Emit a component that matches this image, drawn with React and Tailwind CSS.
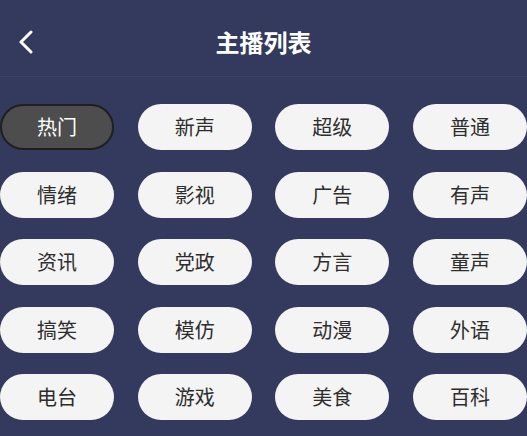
import React from "react";

const tags = [
  "热门", "新声", "超级", "普通",
  "情绪", "影视", "广告", "有声",
  "资讯", "党政", "方言", "童声",
  "搞笑", "模仿", "动漫", "外语",
  "电台", "游戏", "美食", "百科",
];

export default function App() {
  return (
    <div
      className="w-[527px] h-[436px] overflow-hidden bg-[#333a5e]"
      style={{ fontFamily: '"Noto Sans CJK SC", "Noto Sans", sans-serif' }}
    >
      <div className="relative h-[77px] pt-[8px] flex items-center justify-center border-b border-[#3c4367]">
        <svg
          className="absolute left-[17px] top-[30px]"
          width="18"
          height="24"
          viewBox="0 0 18 24"
          fill="none"
        >
          <path d="M14 2 L4 12 L14 22" stroke="white" strokeWidth="3" strokeLinecap="round" strokeLinejoin="round" />
        </svg>
        <div className="text-white text-[24px] font-bold leading-none">主播列表</div>
      </div>
      <div className="pt-[27px] grid grid-cols-[114px_114px_114px_114px] justify-between gap-y-[21.5px]">
        {tags.map((t, i) => (
          <div
            key={t}
            className={
              i === 0
                ? "h-[46px] rounded-full bg-[#4d4d4d] border-2 border-[#1f1f1f] flex items-center justify-center text-white text-[20px]"
                : "h-[46px] rounded-full bg-[#f4f4f4] flex items-center justify-center text-[#2e2e2e] text-[20px]"
            }
          >
            {t}
          </div>
        ))}
      </div>
    </div>
  );
}
